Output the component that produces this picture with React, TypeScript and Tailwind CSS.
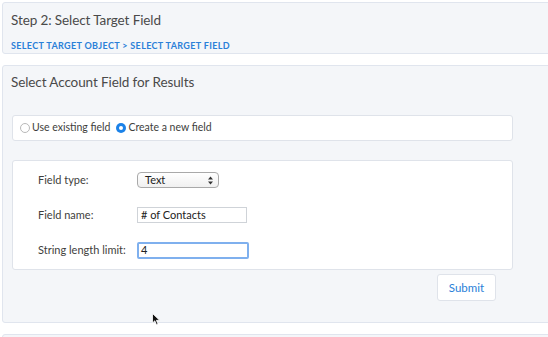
import React from 'react';

const font = { fontFamily: 'Lato, "Liberation Sans", sans-serif' };

const Radio: React.FC<{ checked?: boolean; label: string }> = ({ checked, label }) => (
    <label className="flex items-center gap-[2px]">
        {checked ? (
            <span className="w-[10px] h-[10px] rounded-full bg-[#1b82e8] flex items-center justify-center">
                <span className="w-[4px] h-[4px] rounded-full bg-white" />
            </span>
        ) : (
            <span className="w-[10px] h-[10px] rounded-full border border-[#b9b9b9] bg-white" />
        )}
        <span>{label}</span>
    </label>
);

const Row: React.FC<{ label: string; children: React.ReactNode }> = ({ label, children }) => (
    <div className="flex items-center h-[18px]">
        <span className="w-[99px] shrink-0">{label}</span>
        {children}
    </div>
);

export default function App() {
    return (
        <div className="relative w-[548px] h-[337px] overflow-hidden bg-white text-[#3e3e3c]" style={font}>
            <div className="w-[560px] pl-[2px] pt-[2px]">
                {/* Step header */}
                <section className="h-[52px] bg-[#f4f6f9] border border-[#e0e5ee] rounded-[3px] px-[8px] pt-[7px]">
                    <h1 className="text-[13.5px] leading-[20px] tracking-[-0.1px] text-[#4a4a4a]">Step 2: Select Target Field</h1>
                    <nav className="mt-[10px] text-[9px] leading-[12px] font-bold tracking-[0.35px] text-[#2a80d8]">
                        SELECT TARGET OBJECT &gt; SELECT TARGET FIELD
                    </nav>
                </section>

                {/* Field selection panel */}
                <section className="mt-[11px] h-[258px] bg-[#f4f6f9] border border-[#e0e5ee] rounded-[3px] px-[9px] pt-[6px]">
                    <h2 className="-ml-[1px] text-[13.5px] leading-[20px] tracking-[-0.1px] text-[#4a4a4a]">Select Account Field for Results</h2>

                    <div className="mt-[23px] w-[501px] h-[26px] bg-white border border-[#dfe3ea] rounded-[3px] flex items-center gap-[6px] pl-[7px] text-[10.5px]">
                        <Radio label="Use existing field" />
                        <Radio checked label="Create a new field" />
                    </div>

                    <div className="mt-[19px] w-[501px] h-[110px] bg-white border border-[#dfe3ea] rounded-[3px] pl-[25px] pt-[10px] text-[11px] flex flex-col gap-[17px]">
                        <Row label="Field type:">
                            <div className="w-[82px] h-[16px] rounded-[4px] border border-[#a9a9a9] bg-gradient-to-b from-white to-[#f0f0f0] flex items-center justify-between pl-[7px] pr-[5px] text-[11px] text-[#222]">
                                <span>Text</span>
                                <svg width="5" height="9" viewBox="0 0 5 9">
                                    <path d="M2.5 0.5 L5 3.5 H0 Z" fill="#333" />
                                    <path d="M2.5 8.5 L5 5.5 H0 Z" fill="#333" />
                                </svg>
                            </div>
                        </Row>
                        <Row label="Field name:">
                            <div className="w-[110px] h-[16px] border border-[#cfd3d8] bg-white flex items-center pl-[3px] text-[11px] text-[#222]">
                                # of Contacts
                            </div>
                        </Row>
                        <Row label="String length limit:">
                            <div className="w-[112px] h-[17px] border-2 border-[#7fb0ee] rounded-[2px] bg-white flex items-center pl-[2px] text-[11px] text-[#222]">
                                4
                            </div>
                        </Row>
                    </div>

                    <div className="w-[501px] flex justify-end mt-[4px]">
                        <button className="mr-[17px] w-[59px] h-[27px] bg-white border border-[#dfe3ea] rounded-[3px] text-[11.5px] text-[#2a80d8]">
                            Submit
                        </button>
                    </div>
                </section>

                <section className="mt-[11px] h-[20px] bg-[#f4f6f9] border border-[#e0e5ee] rounded-[3px]" />
            </div>

            {/* mouse pointer */}
            <svg className="absolute left-[152px] top-[313px]" width="9" height="13" viewBox="0 0 9 13">
                <path d="M0.5 0.5 L0.5 10 L2.8 7.8 L4.5 11.8 L6 11.1 L4.4 7.3 L7.6 7.3 Z" fill="#111" stroke="#fff" strokeWidth="0.8" />
            </svg>
        </div>
    );
}
